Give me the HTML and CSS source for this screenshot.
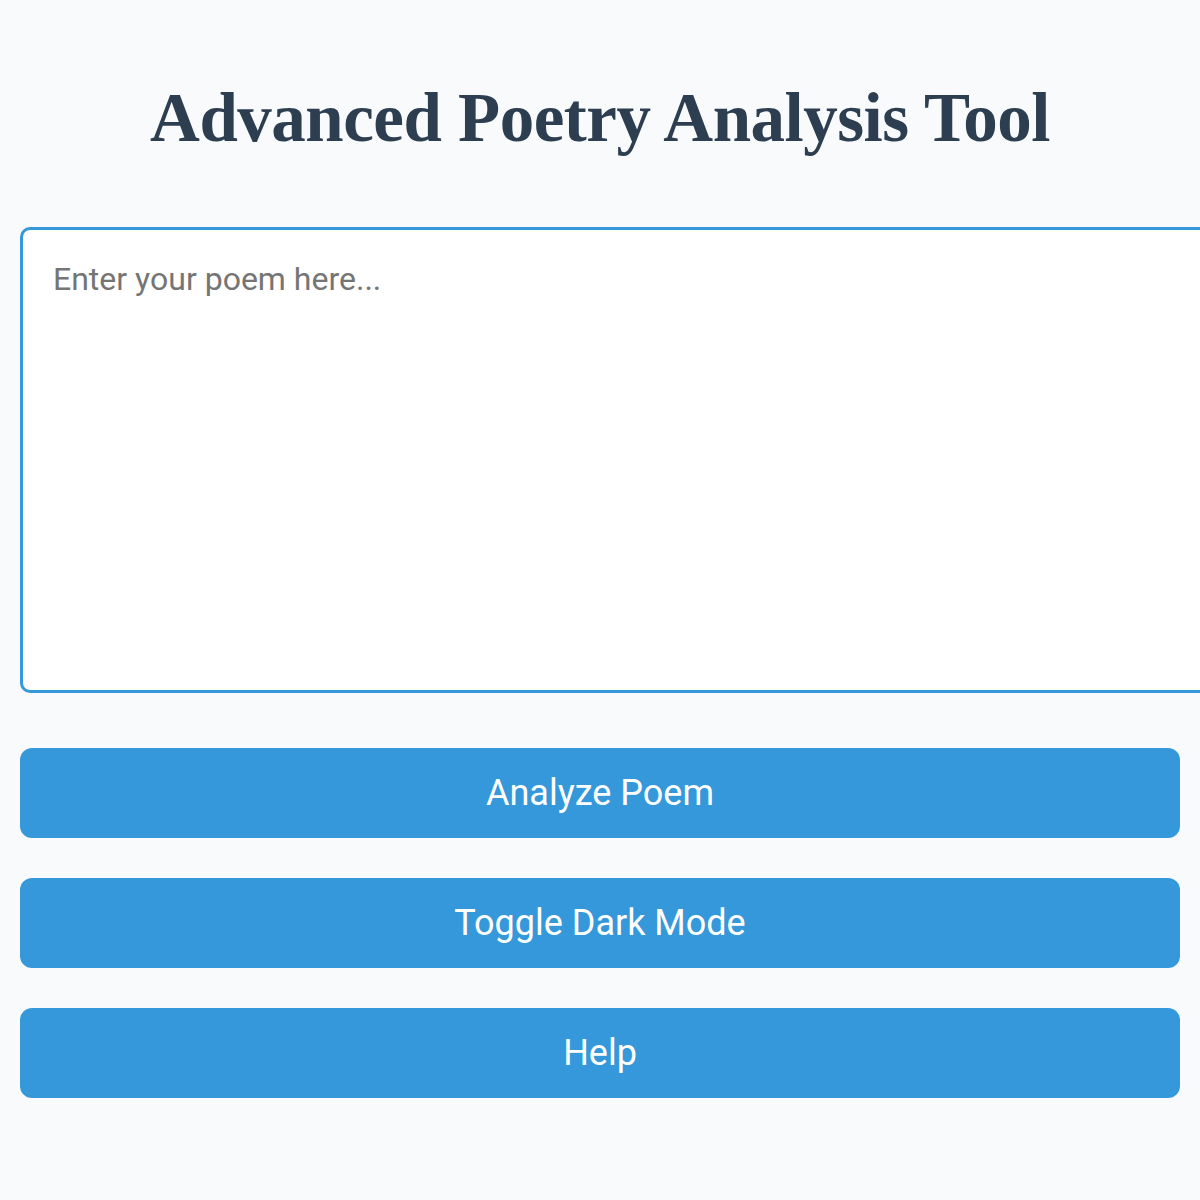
FILE: index.html
```html
<!DOCTYPE html>
<html lang="en">
<head>
  <meta charset="UTF-8" />
  <meta name="viewport" content="width=device-width, initial-scale=1.0"/>
  <title>Advanced Poetry Analysis Tool</title>
  <link rel="stylesheet" href="styles.css">
</head>
<body>

<div class="container">
  <h1>Advanced Poetry Analysis Tool</h1>
  <textarea id="poemInput" placeholder="Enter your poem here..."></textarea>
  <div class="actions">
    <button id="analyzeBtn">Analyze Poem</button>
    <button id="darkModeBtn">Toggle Dark Mode</button>
    <button id="helpBtn">Help</button>
  </div>
</div>

</body>
</html>
```

FILE: styles.css
```css
html, body {
  margin: 0;
  padding: 0;
}
body {
  font-family: Roboto, "Liberation Sans", sans-serif;
  background-color: #f8fafc;
  color: #333;
  overflow-x: hidden;
}
.container {
  padding: 20px;
}
h1 {
  font-family: "Liberation Serif", "DejaVu Serif", serif;
  font-weight: bold;
  font-size: 69px;
  color: #2c3e50;
  text-align: center;
  margin: 57px 0 67px;
  line-height: 1.2;
  letter-spacing: -0.5px;
}
textarea {
  display: block;
  width: 100%;
  height: 400px;
  padding: 30px;
  border: 3px solid #3498db;
  border-radius: 10px;
  background-color: #fff;
  font-family: Roboto, "Liberation Sans", sans-serif;
  font-size: 32px;
  line-height: 1.2;
  color: #333;
  resize: none;
  outline: none;
}
textarea::placeholder {
  color: #757575;
}
.actions {
  display: flex;
  flex-direction: column;
  gap: 40px;
  margin-top: 55px;
}
button {
  height: 90px;
  border: none;
  border-radius: 12px;
  background-color: #3498db;
  color: #fff;
  font-family: Roboto, "Liberation Sans", sans-serif;
  font-size: 36px;
  cursor: pointer;
}
```
